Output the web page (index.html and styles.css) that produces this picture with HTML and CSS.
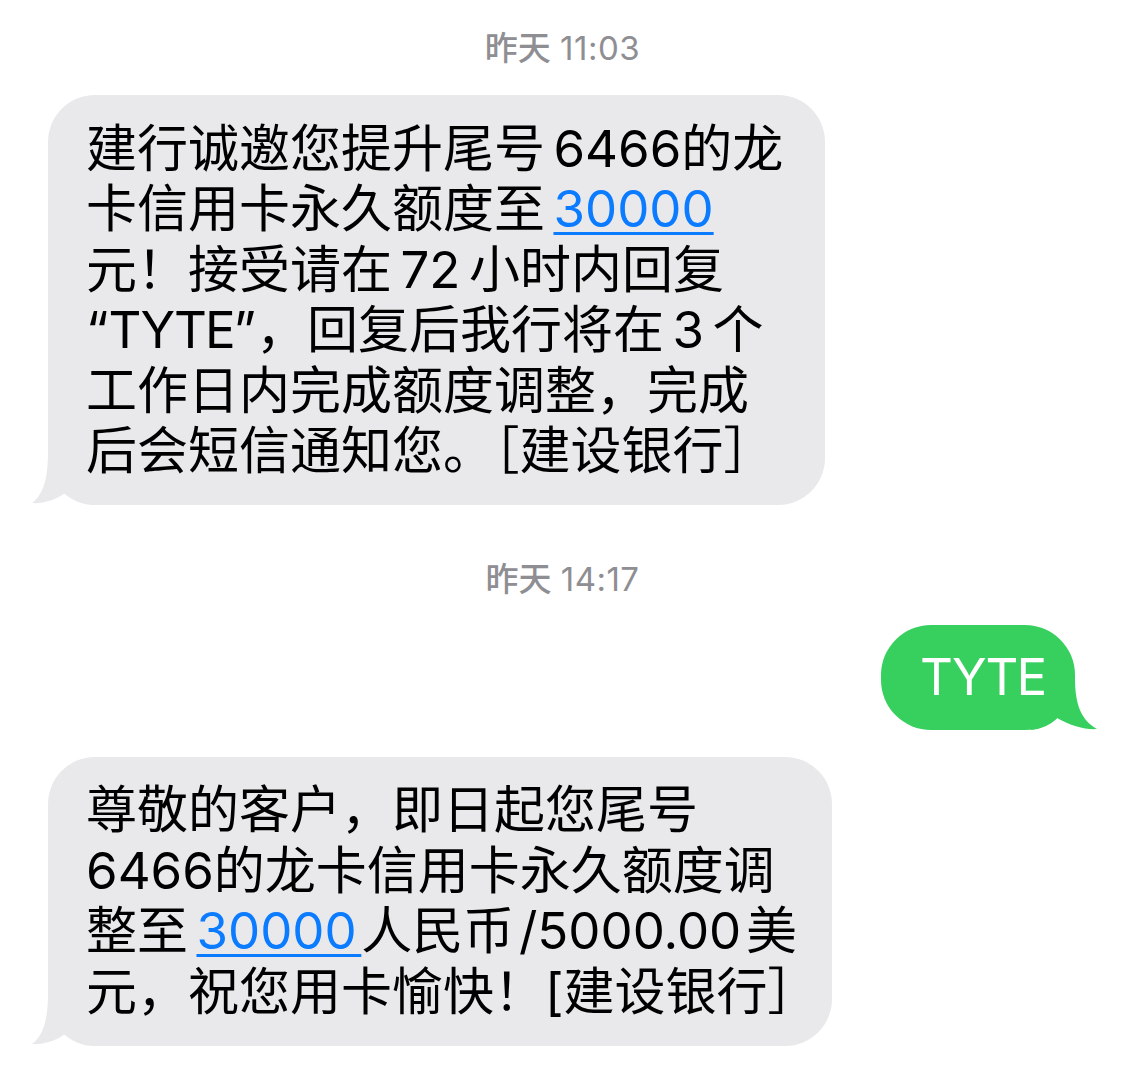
FILE: index.html
```html
<!DOCTYPE html>
<html lang="zh-CN">
<head>
<meta charset="utf-8">
<title>信息</title>
<link rel="stylesheet" href="styles.css">
</head>
<body>
<div class="thread">
  <div class="stamp stamp-first"><span class="day">昨天</span> <span class="time">11:03</span></div>

  <div class="bubble in b1">
    <div class="text">建行诚邀您提升尾号&#8198;6466的龙<br>卡信用卡永久额度至&#8198;<span class="link">30000</span><br>元！接受请在&#8198;72&#8198;小时内回复<br>“<span class="tight">TYTE</span>”，回复后我行将在&#8198;3&#8198;个<br>工作日内完成额度调整，完成<br>后会短信通知您。［建设银行］</div>
    <svg class="tail tail-in" viewBox="0 0 64 52" width="64" height="52" aria-hidden="true"><path d="M16 0 C16 26 11 42 0 50 C10 51 24 47 33 40 C41 47 52 51 64 52 L64 0 Z"/></svg>
  </div>

  <div class="stamp stamp-second"><span class="day">昨天</span> <span class="time">14:17</span></div>

  <div class="bubble out b2">
    <div class="text"><span class="tight">TYTE</span></div>
    <svg class="tail tail-out" viewBox="0 0 66 52" width="66" height="52" aria-hidden="true"><path d="M44 0 C44 26 50 42 66 51 C55 52 40 48 26 40 C20 47 10 51 0 52 L0 0 Z"/></svg>
  </div>

  <div class="bubble in b3">
    <div class="text">尊敬的客户，即日起您尾号<br>6466的龙卡信用卡永久额度调<br>整至&#8198;<span class="link">30000&#8202;</span>人民币&#8202;/5000.00&#8202;美<br>元，祝您用卡愉快！[建设银行］</div>
    <svg class="tail tail-in" viewBox="0 0 64 52" width="64" height="52" aria-hidden="true"><path d="M16 0 C16 26 11 42 0 50 C10 51 24 47 33 40 C41 47 52 51 64 52 L64 0 Z"/></svg>
  </div>
</div>
</body>
</html>
```

FILE: styles.css
```css
html, body {
  margin: 0;
  padding: 0;
  background: #ffffff;
}

body {
  font-family: "Inter", "Noto Sans CJK SC", sans-serif;
  color: #000000;
}

.thread {
  display: flex;
  flex-direction: column;
  width: 1125px;
}

.stamp {
  align-self: center;
  font-size: 33px;
  line-height: 40px;
  color: #8e8e93;
  font-weight: 400;
  white-space: nowrap;
}

.stamp .day {
  font-weight: 500;
}

.stamp .time {
  letter-spacing: 0.5px;
}

.stamp-first {
  margin-top: 28px;
}

.stamp-second {
  margin-top: 54px;
}

.bubble {
  position: relative;
  box-sizing: border-box;
  font-size: 51px;
  line-height: 60.5px;
  white-space: nowrap;
}

.bubble.in {
  align-self: flex-start;
  margin-left: 48px;
  background: #e9e9eb;
  border-radius: 47px;
  padding: 23.5px 38px;
}

.bubble.out {
  align-self: flex-end;
  margin-right: 50px;
  background: #37d05f;
  color: #ffffff;
  border-radius: 50px;
  padding: 22px 38px 22px 39px;
}

.b1 {
  width: 777px;
  margin-top: 27px;
}

.b2 {
  width: 194px;
  margin-top: 26px;
}

.b3 {
  width: 784px;
  margin-top: 27px;
  padding-top: 23px;
  padding-bottom: 23px;
}

.text {
  position: relative;
  z-index: 1;
}

.tight {
  letter-spacing: -2px;
}

.link {
  color: #0b7bff;
  text-decoration: underline;
  text-decoration-thickness: 3px;
  text-underline-offset: 5px;
}

.tail {
  position: absolute;
  bottom: 0;
  display: block;
}

.tail-in {
  left: -16px;
  fill: #e9e9eb;
}

.tail-out {
  right: -22px;
  fill: #37d05f;
}
```
